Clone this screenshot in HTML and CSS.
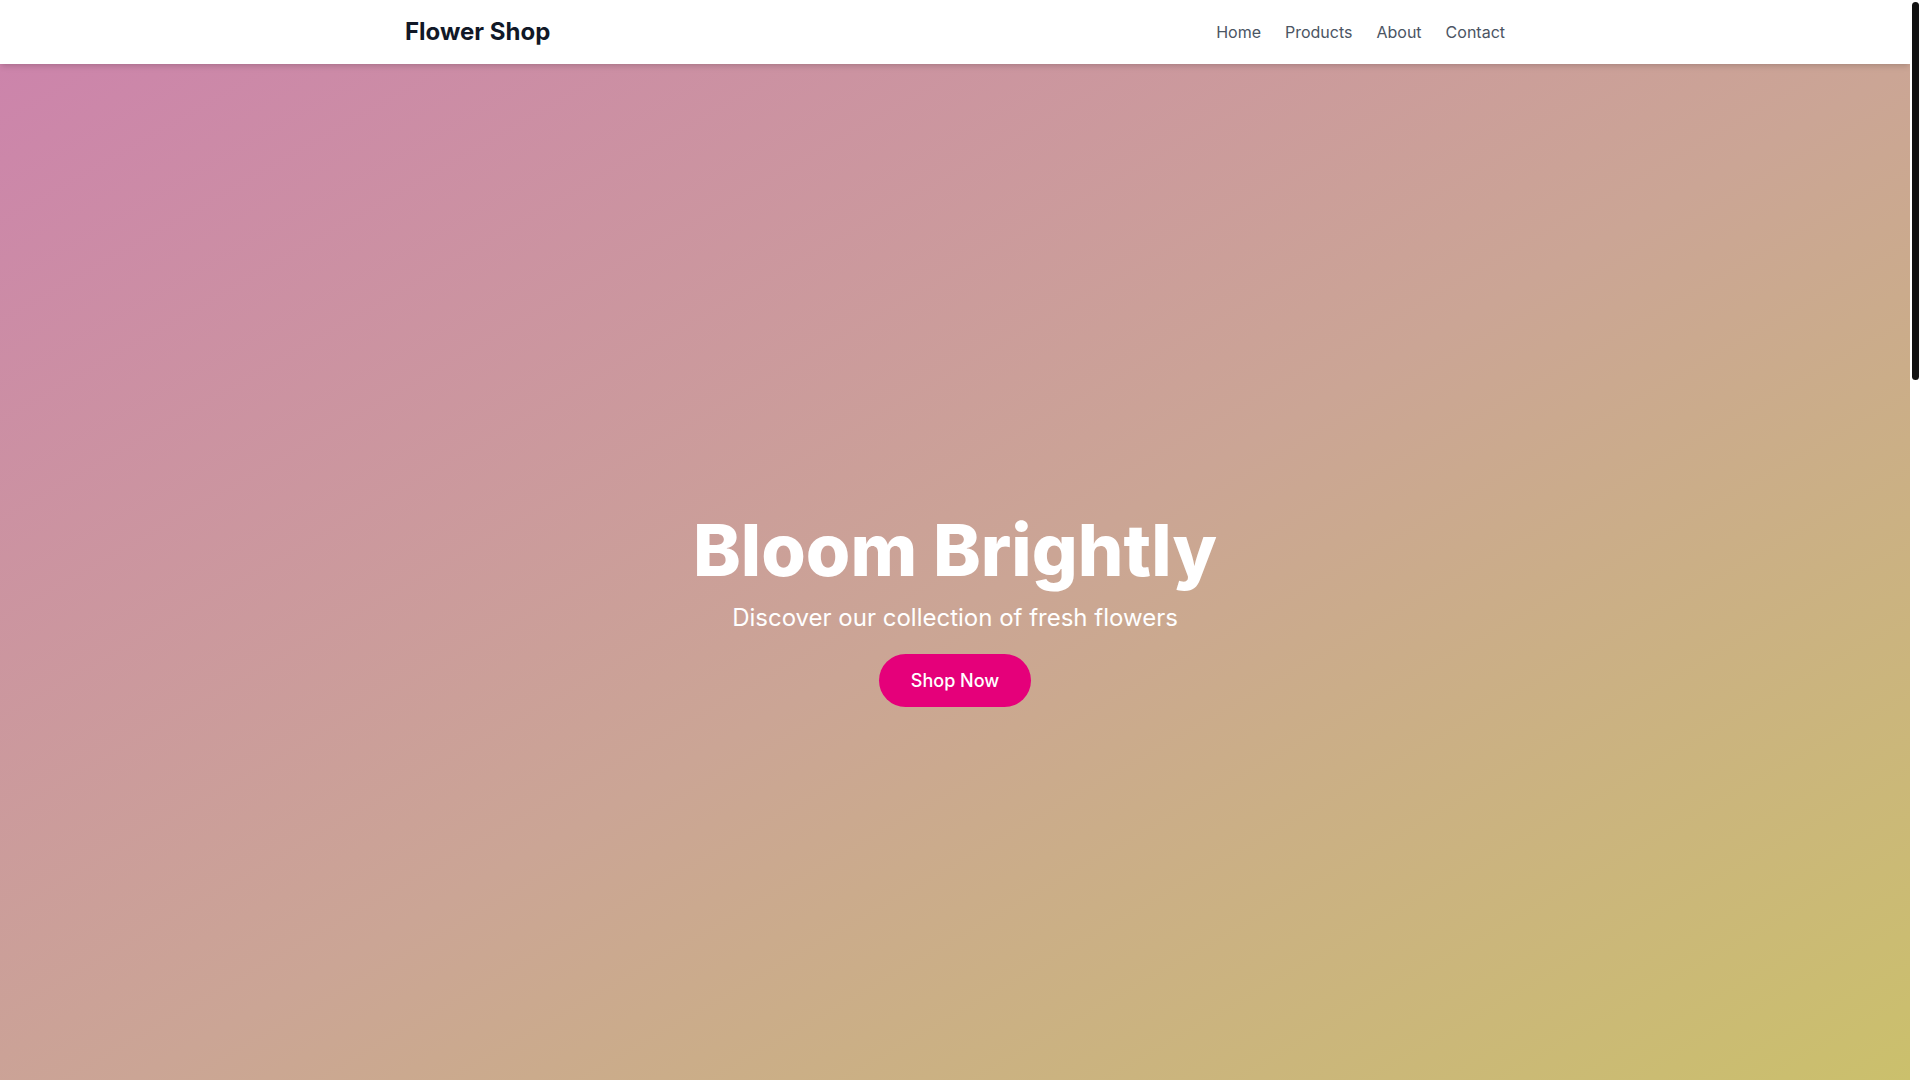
FILE: index.html
```html
<!DOCTYPE html>
<html lang="en">
<head>
<meta charset="utf-8">
<title>Flower Shop</title>
<link rel="stylesheet" href="styles.css">
</head>
<body>
<header class="site-header">
  <div class="container header-inner">
    <a class="logo" href="#">Flower Shop</a>
    <nav class="nav">
      <a href="#">Home</a>
      <a href="#">Products</a>
      <a href="#">About</a>
      <a href="#">Contact</a>
    </nav>
  </div>
</header>
<main>
  <section class="hero">
    <div class="hero-content">
      <h1 class="hero-title">Bloom Brightly</h1>
      <p class="hero-sub">Discover our collection of fresh flowers</p>
      <a class="btn" href="#">Shop Now</a>
    </div>
  </section>
</main>
<div class="scrollbar" aria-hidden="true"><div class="scrollbar-thumb"></div></div>
</body>
</html>
```
FILE: styles.css
```css
* { box-sizing: border-box; }
html, body { margin: 0; padding: 0; }
html { overflow: hidden; }
body {
  font-family: Inter, "Noto Sans", sans-serif;
  color: #111827;
  background: #ffffff;
  padding-right: 10px;
}
a { text-decoration: none; color: inherit; }

.container {
  max-width: 1100px;
  margin: 0 auto;
}

.site-header {
  position: relative;
  z-index: 2;
  background: #ffffff;
  box-shadow: 0 4px 6px -1px rgba(0,0,0,0.1), 0 2px 4px -2px rgba(0,0,0,0.1);
}
.header-inner {
  height: 64px;
  display: flex;
  align-items: center;
  justify-content: space-between;
}
.logo {
  font-size: 24px;
  line-height: 32px;
  font-weight: 700;
  color: #111827;
}
.nav {
  display: flex;
  gap: 24px;
}
.nav a {
  font-size: 16px;
  line-height: 24px;
  color: #4b5563;
}

.hero {
  height: 1092px;
  display: flex;
  align-items: center;
  justify-content: center;
  background: linear-gradient(to bottom right, #cc84ab 0%, #cba595 50%, #cbc269 100%);
  text-align: center;
  color: #ffffff;
}
.hero-content {
  display: flex;
  flex-direction: column;
  align-items: center;
}
.hero-title {
  margin: 0 0 16px;
  font-size: 72px;
  line-height: 72px;
  font-weight: 800;
  letter-spacing: 0;
}
.hero-sub {
  margin: 0 0 20px;
  font-size: 24px;
  line-height: 32px;
  font-weight: 400;
}
.btn {
  display: inline-block;
  background: #e5007a;
  color: #ffffff;
  font-size: 18px;
  line-height: 29px;
  font-weight: 500;
  padding: 12px 32px;
  border-radius: 9999px;
}

.scrollbar {
  position: fixed;
  top: 0;
  right: 0;
  width: 10px;
  height: 100vh;
  background: #ffffff;
  padding: 2px 1px 0 2px;
  z-index: 10;
}
.scrollbar-thumb {
  width: 7px;
  height: 378px;
  background: #111111;
  border-radius: 4px;
}
```
